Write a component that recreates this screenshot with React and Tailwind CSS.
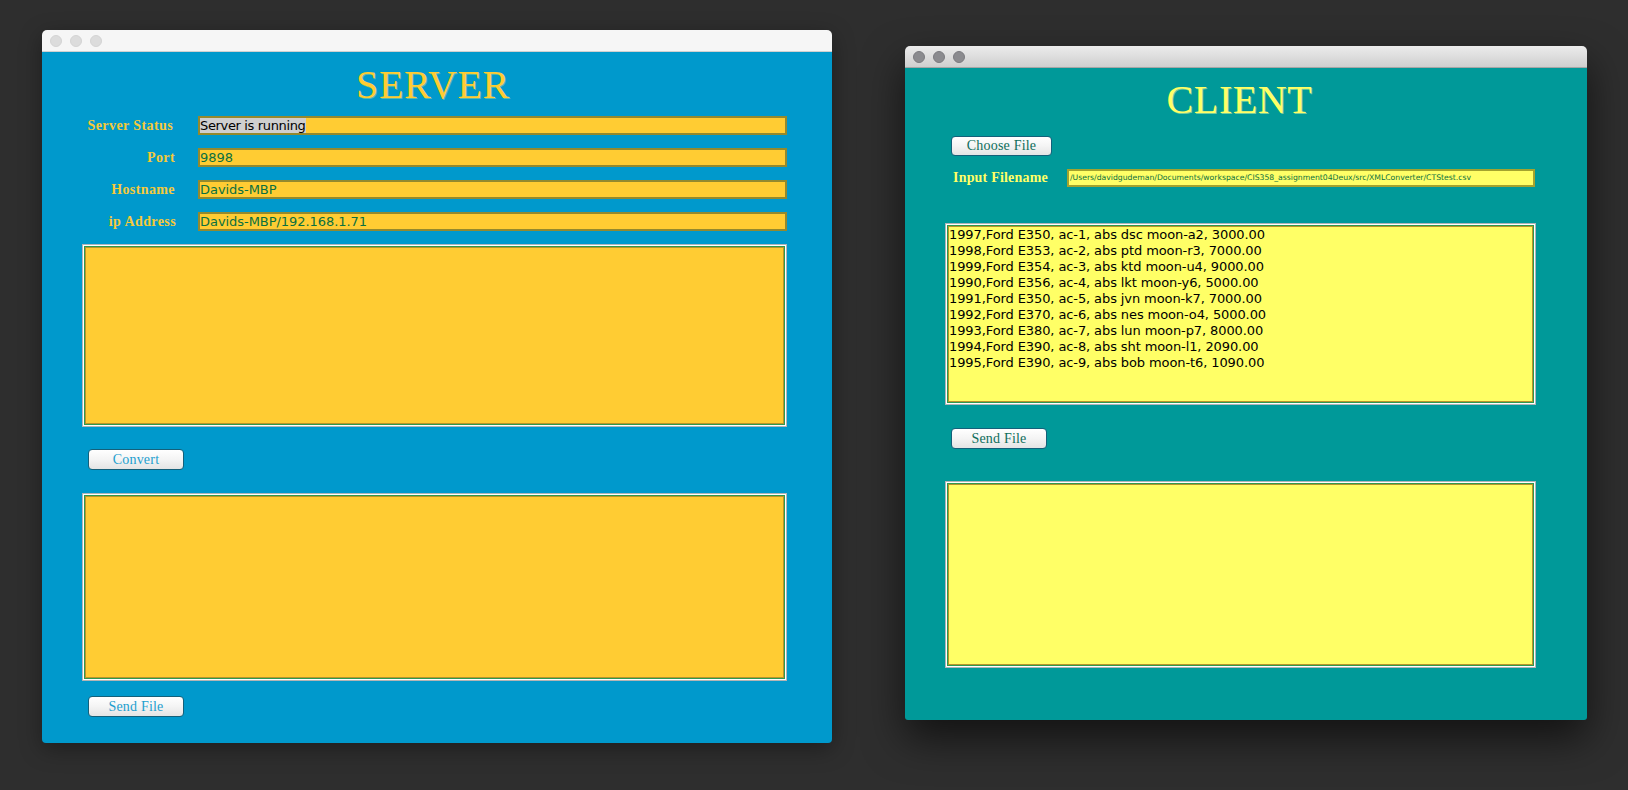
const CSV_ROWS = [
  '1997,Ford E350, ac-1, abs dsc moon-a2, 3000.00',
  '1998,Ford E353, ac-2, abs ptd moon-r3, 7000.00',
  '1999,Ford E354, ac-3, abs ktd moon-u4, 9000.00',
  '1990,Ford E356, ac-4, abs lkt moon-y6, 5000.00',
  '1991,Ford E350, ac-5, abs jvn moon-k7, 7000.00',
  '1992,Ford E370, ac-6, abs nes moon-o4, 5000.00',
  '1993,Ford E380, ac-7, abs lun moon-p7, 8000.00',
  '1994,Ford E390, ac-8, abs sht moon-l1, 2090.00',
  '1995,Ford E390, ac-9, abs bob moon-t6, 1090.00',
]

const SERVER_ROWS = [
  { label: 'Server Status', value: 'Server is running', selected: true, labelClass: 'pr-[2px]' },
  { label: 'Port', value: '9898' },
  { label: 'Hostname', value: 'Davids-MBP' },
  { label: 'ip Address', value: 'Davids-MBP/192.168.1.71', labelClass: '-mr-px' },
]

function TitleBar({ active }) {
  const dot = active ? 'bg-[#8b8b8f] border-[#7b7b80]' : 'bg-[#dcdcdc] border-[#d4d4d4]'
  return (
    <div className={`h-[22px] shrink-0 flex items-center gap-[8px] pl-[8px] rounded-t-[5px] border-b ${active ? 'bg-gradient-to-b from-[#ececec] to-[#cfcfcf] border-b-[#a6a6a6]' : 'bg-[#f6f6f6] border-b-[#d0d0d0]'}`}>
      <span className={`w-[12px] h-[12px] rounded-full border ${dot}`} />
      <span className={`w-[12px] h-[12px] rounded-full border ${dot}`} />
      <span className={`w-[12px] h-[12px] rounded-full border ${dot}`} />
    </div>
  )
}

function MacButton({ children, className }) {
  return (
    <button className={`rounded-[4px] border border-[#14607a] bg-gradient-to-b from-white via-[#f4f4f4] to-[#e4e4e4] font-['Liberation_Serif',serif] text-[14px] leading-[18px] tracking-[0.2px] ${className}`}>
      {children}
    </button>
  )
}

function TextBox({ fill, height, children }) {
  return (
    <div className={`border border-[#b4b4b4] ${height}`}>
      <div className="h-full border border-white">
        <div className="h-full border border-[#2f9a4f]">
          <div className={`h-full border border-[#b8932e] overflow-hidden ${fill}`}>
            {children}
          </div>
        </div>
      </div>
    </div>
  )
}

function ServerWindow() {
  return (
    <div className="w-[790px] h-[713px] mt-[30px] shrink-0 flex flex-col rounded-[5px] shadow-[0_6px_22px_rgba(0,0,0,0.35)]">
      <TitleBar />
      <div className="flex-1 bg-[#0099cc] rounded-b-[4px] pl-[40px] pr-[45px] flex flex-col">
        <h1 className="h-[64px] pt-[10px] pr-[3px] text-center font-['Liberation_Serif',serif] text-[40px] leading-[46px] tracking-[0.6px] text-[#ffcc33] [text-shadow:1px_1px_0_#5cb8a8]">
          SERVER
        </h1>
        <div className="flex flex-col gap-[13px]">
          {SERVER_ROWS.map((row) => (
            <div key={row.label} className="flex items-center h-[19px]">
              <span className="w-[93px] shrink-0 text-right whitespace-nowrap font-['Liberation_Serif',serif] font-bold text-[14px] leading-[19px] tracking-[0.4px] text-[#f5c93a]">
                <span className={`inline-block ${row.labelClass || ''}`}>{row.label}</span>
              </span>
              <div className="ml-[23px] w-[589px] h-[19px] border-2 border-[#93892e] bg-[#ffcc33] flex items-center font-['DejaVu_Sans',sans-serif] text-[13px] leading-[15px] text-[#0b7040]">
                <span className={row.selected ? 'bg-[#cfcfcf] text-black tracking-[-0.35px]' : 'tracking-[-0.05px]'}>{row.value}</span>
              </div>
            </div>
          ))}
        </div>
        <div className="mt-[13px]">
          <TextBox fill="bg-[#ffcc33]" height="h-[183px]" />
        </div>
        <MacButton className="h-[21px] mt-[22px] ml-[6px] w-[96px] text-[#1ea0cf]">Convert</MacButton>
        <div className="mt-[23px]">
          <TextBox fill="bg-[#ffcc33]" height="h-[188px]" />
        </div>
        <MacButton className="h-[21px] mt-[15px] ml-[6px] w-[96px] text-[#1ea0cf]">Send File</MacButton>
      </div>
    </div>
  )
}

function ClientWindow() {
  return (
    <div className="w-[682px] h-[674px] mt-[46px] ml-[73px] shrink-0 flex flex-col rounded-[5px] shadow-[0_18px_40px_rgba(0,0,0,0.6)]">
      <TitleBar active />
      <div className="flex-1 bg-[#009999] rounded-b-[3px] pl-[40px] pr-[51px] flex flex-col">
        <h1 className="h-[68px] pt-[9px] pr-[2px] text-center font-['Liberation_Serif',serif] text-[40px] leading-[46px] tracking-[0.6px] text-[#ffff66] [text-shadow:1px_1px_0_#77cc99]">
          CLIENT
        </h1>
        <MacButton className="h-[20px] ml-[6px] w-[101px] text-[#0f6e5c]">Choose File</MacButton>
        <div className="mt-[13px] h-[18px] flex items-center">
          <span className="ml-[8px] w-[95px] shrink-0 whitespace-nowrap font-['Liberation_Serif',serif] font-bold text-[14px] leading-[18px] tracking-[0.2px] text-[#ffff66]">
            Input Filename
          </span>
          <div className="ml-[19px] w-[468px] h-[18px] border-2 border-[#a3a32e] bg-[#ffff66] flex items-center pl-px whitespace-nowrap font-['DejaVu_Sans',sans-serif] text-[7.7px] leading-[12px] text-[#0b7040]">
            /Users/davidgudeman/Documents/workspace/CIS358_assignment04Deux/src/XMLConverter/CTStest.csv
          </div>
        </div>
        <div className="mt-[36px]">
          <TextBox fill="bg-[#ffff66]" height="h-[182px]">
            <div className="font-['DejaVu_Sans',sans-serif] text-[13px] leading-[16px] tracking-[-0.1px] text-black whitespace-nowrap">
              {CSV_ROWS.map((row) => (
                <div key={row}>{row}</div>
              ))}
            </div>
          </TextBox>
        </div>
        <MacButton className="h-[21px] mt-[23px] ml-[6px] w-[96px] text-[#0f6e5c]">Send File</MacButton>
        <div className="mt-[32px]">
          <TextBox fill="bg-[#ffff66]" height="h-[187px]" />
        </div>
      </div>
    </div>
  )
}

export default function App() {
  return (
    <div className="w-full h-[790px] overflow-hidden bg-[#2e2e2e] flex items-start pl-[42px]">
      <ServerWindow />
      <ClientWindow />
    </div>
  )
}
